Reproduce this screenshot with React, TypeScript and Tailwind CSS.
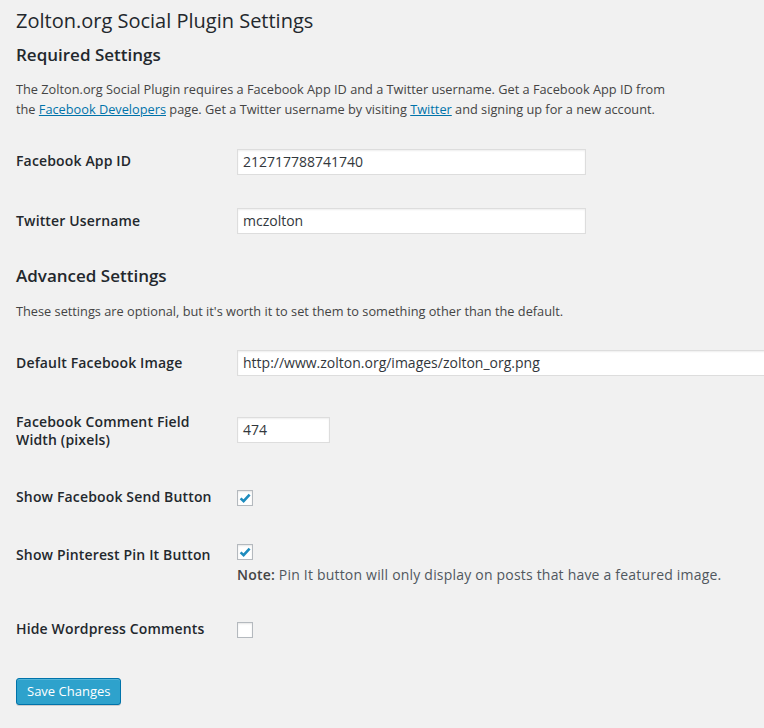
import React from "react";

const font = { fontFamily: '"Open Sans", "Liberation Sans", sans-serif' };

const Check = ({ checked }: { checked?: boolean }) => (
  <span className="flex h-4 w-4 items-center justify-center border border-[#b4b9be] bg-white shadow-[inset_0_1px_2px_rgba(0,0,0,0.1)]">
    {checked && (
      <svg width="14" height="14" viewBox="0 0 14 14">
        <path d="M2.6 7.4 L5.6 10.2 L11.6 3.6" fill="none" stroke="#1e8cbe" strokeWidth="2.6" />
      </svg>
    )}
  </span>
);

const TextInput = ({ value, width }: { value: string; width: string }) => (
  <div
    className={`${width} h-[26px] shrink-0 border border-[#ddd] bg-white px-[5px] text-[14px] leading-[24px] text-[#32373c] shadow-[inset_0_1px_2px_rgba(0,0,0,0.07)]`}
  >
    {value}
  </div>
);

const labelCls =
  "w-[200px] shrink-0 text-[14px] font-semibold leading-[18px] tracking-[0.15px] text-[#23282d]";

export default function App() {
  return (
    <div className="min-h-screen w-full overflow-hidden bg-[#f1f1f1] text-[#444]" style={font}>
      <div className="px-4 pt-[6px] pb-10">
        <h1 className="text-[20px] font-normal leading-[29px] text-[#23282d]">
          Zolton.org Social Plugin Settings
        </h1>

        <h3 className="mt-[8px] text-[17px] font-semibold leading-[24px] text-[#23282d]">
          Required Settings
        </h3>
        <p className="mt-[13px] whitespace-nowrap text-[12.75px] leading-[19.5px]">
          The Zolton.org Social Plugin requires a Facebook App ID and a Twitter username. Get a Facebook App ID from
          <br />
          the{" "}
          <a className="text-[#0073aa] underline" href="#">
            Facebook Developers
          </a>{" "}
          page. Get a Twitter username by visiting{" "}
          <a className="text-[#0073aa] underline" href="#">
            Twitter
          </a>{" "}
          and signing up for a new account.
        </p>

        <div className="mt-[30px] flex gap-[21px]">
          <label className={`${labelCls} pt-[3px]`}>Facebook App ID</label>
          <TextInput value="212717788741740" width="w-[349px]" />
        </div>

        <div className="mt-[33px] flex gap-[21px]">
          <label className={`${labelCls} pt-[4px]`}>Twitter Username</label>
          <TextInput value="mczolton" width="w-[349px]" />
        </div>

        <h3 className="mt-[30px] text-[17px] font-semibold leading-[24px] text-[#23282d]">
          Advanced Settings
        </h3>
        <p className="mt-[13px] whitespace-nowrap text-[12.75px] leading-[20px]">
          These settings are optional, but it's worth it to set them to something other than the default.
        </p>

        <div className="mt-[29px] flex gap-[21px]">
          <label className={`${labelCls} pt-[4px]`}>Default Facebook Image</label>
          <TextInput value="http://www.zolton.org/images/zolton_org.png" width="w-[600px]" />
        </div>

        <div className="mt-[37px] flex gap-[21px]">
          <label className={labelCls}>Facebook Comment Field Width (pixels)</label>
          <div className="pt-[4px]">
            <TextInput value="474" width="w-[93px]" />
          </div>
        </div>

        <div className="mt-[39px] flex gap-[21px]">
          <label className={labelCls}>Show Facebook Send Button</label>
          <div className="pt-[2px]">
            <Check checked />
          </div>
        </div>

        <div className="mt-[38px] flex gap-[21px]">
          <label className={`${labelCls} pt-[2px]`}>Show Pinterest Pin It Button</label>
          <div className="flex flex-col">
            <Check checked />
            <p className="mt-[5px] whitespace-nowrap text-[14px] leading-[20px] tracking-[0.2px] text-[#50575e]">
              <span className="font-semibold text-[#444]">Note:</span> Pin It button will only display on posts
              that have a featured image.
            </p>
          </div>
        </div>

        <div className="mt-[35px] flex gap-[21px]">
          <label className={labelCls}>Hide Wordpress Comments</label>
          <div className="pt-[2px]">
            <Check />
          </div>
        </div>

        <button className="mt-[40px] h-[27px] rounded-[3px] border border-[#0073aa] bg-[#2ea2cc] px-[10px] text-[13px] leading-[25px] text-white shadow-[inset_0_1px_0_rgba(120,200,230,0.5),0_1px_0_rgba(0,0,0,0.15)]">
          Save Changes
        </button>
      </div>
    </div>
  );
}
